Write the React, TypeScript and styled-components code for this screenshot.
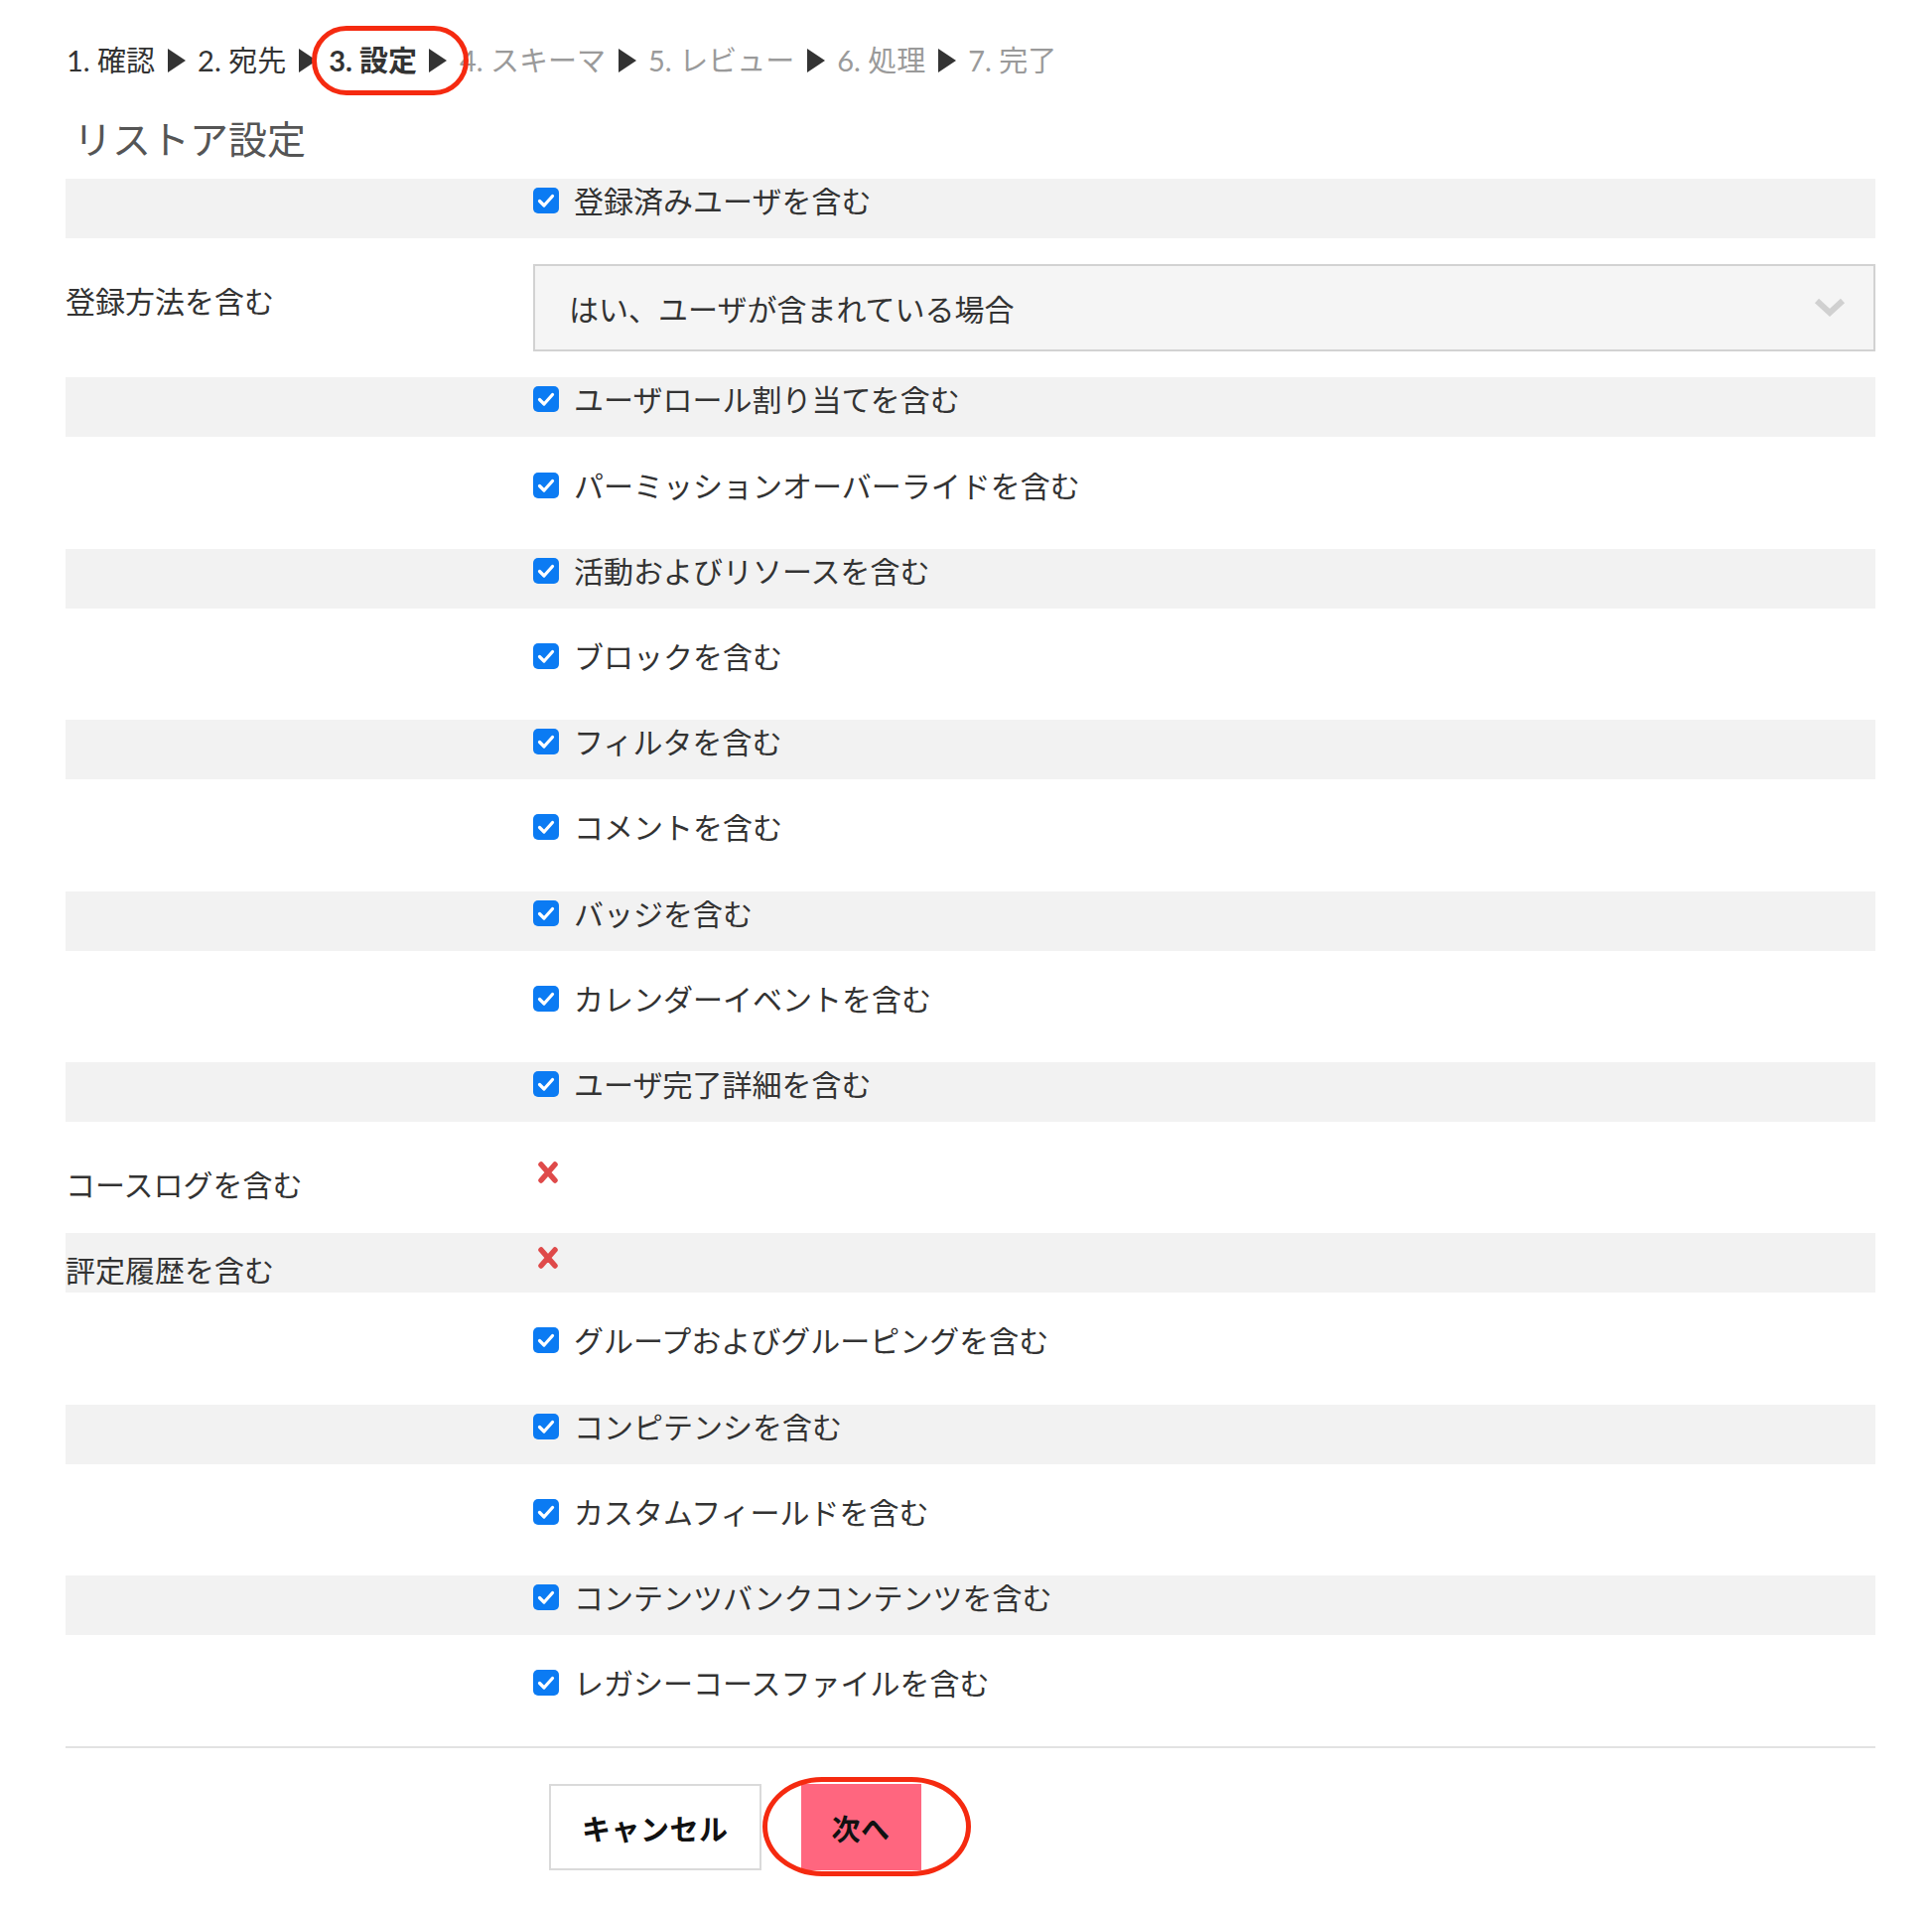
import React from 'react';
import styled, { createGlobalStyle } from 'styled-components';

const GlobalStyle = createGlobalStyle`
  body {
    margin: 0;
    background: #fff;
    color: #333;
    font-family: Lato, "Noto Sans CJK JP", sans-serif;
  }
`;

const Page = styled.div`
  padding: 41px 57px 40px 66px;
`;

const Breadcrumb = styled.nav`
  display: flex;
  align-items: center;
  height: 40px;
  padding-left: 1px;
  font-size: 29px;
  line-height: 40px;
  white-space: nowrap;
`;

const Step = styled.span<{ $state: 'done' | 'current' | 'todo' }>`
  color: ${(p) => (p.$state === 'todo' ? '#9a9a9a' : '#333')};
  font-weight: ${(p) => (p.$state === 'current' ? 700 : 400)};
`;

const Arrow = styled.span`
  display: inline-block;
  width: 0;
  height: 0;
  margin: 0 12.5px;
  border-left: 18px solid #333;
  border-top: 12.5px solid transparent;
  border-bottom: 12.5px solid transparent;
`;

const Current = styled.span`
  position: relative;
  display: inline-flex;
  align-items: center;

  &::after {
    content: '';
    position: absolute;
    top: -15px;
    bottom: -15px;
    left: -17px;
    right: -9px;
    border: 5px solid #f52a10;
    border-radius: 40px;
  }
`;

const Heading = styled.h2`
  margin: 36px 0 17px;
  padding-left: 8px;
  font-size: 39px;
  line-height: 46px;
  font-weight: 400;
  color: #555;
`;

const Row = styled.div<{ $shade: boolean }>`
  display: grid;
  grid-template-columns: 471px 1fr;
  min-height: 60px;
  margin-bottom: 26.2px;
  background: ${(p) => (p.$shade ? '#f2f2f2' : 'transparent')};
`;

const Label = styled.div`
  padding-top: 20px;
  font-size: 30px;
  line-height: 34px;
  color: #333;
`;

const Field = styled.div<{ $top: number }>`
  padding-top: ${(p) => p.$top}px;
`;

const CheckLabel = styled.label`
  display: flex;
  align-items: center;
  gap: 15px;
  height: 34px;
  font-size: 30px;
  line-height: 34px;
  color: #333;
`;

const Select = styled.div`
  box-sizing: border-box;
  display: flex;
  align-items: center;
  justify-content: space-between;
  height: 88px;
  padding: 0 28px 0 34px;
  border: 2px solid #d2d2d2;
  background: #f5f5f5;
  font-size: 30px;
  color: #333;
`;

const Divider = styled.hr`
  margin: 0;
  border: 0;
  border-top: 2px solid #e2e2e2;
`;

const Actions = styled.div`
  display: flex;
  gap: 40px;
  padding: 36px 0 0 487px;
`;

const Button = styled.button<{ $primary?: boolean }>`
  box-sizing: border-box;
  height: 87px;
  padding: 0 31px;
  border: ${(p) => (p.$primary ? '0' : '2px solid #dadada')};
  background: ${(p) => (p.$primary ? '#ff667f' : '#fff')};
  color: #111;
  font-family: Lato, "Noto Sans CJK JP", sans-serif;
  font-size: 29px;
  font-weight: 700;
  letter-spacing: 0.5px;
  cursor: pointer;
`;

const Marked = styled.span`
  position: relative;
  display: inline-flex;

  &::after {
    content: '';
    position: absolute;
    top: -7px;
    bottom: -6px;
    left: -39px;
    right: -50px;
    border: 5px solid #f52a10;
    border-radius: 60px / 50px;
    pointer-events: none;
  }
`;

const CheckIcon = () => (
  <svg width="26" height="26" viewBox="0 0 26 26">
    <rect width="26" height="26" rx="5" fill="#0b7bf3" />
    <path d="M6.5 13.5l4.5 4.5 8.5-9.5" stroke="#fff" strokeWidth="3.2" fill="none" strokeLinecap="round" strokeLinejoin="round" />
  </svg>
);

const CrossIcon = () => (
  <svg width="26" height="22" viewBox="0 0 26 22" style={{ display: 'block', marginLeft: 4 }}>
    <path d="M4 3l14 16M18 3L4 19" stroke="#df4a4a" strokeWidth="5.5" strokeLinecap="round" />
  </svg>
);

const Chevron = () => (
  <svg width="32" height="22" viewBox="0 0 32 22">
    <polyline points="3,4 16,16 29,4" stroke="#d0d0d0" strokeWidth="6" fill="none" />
  </svg>
);

type Item =
  | { kind: 'check'; text: string }
  | { kind: 'select'; label: string; value: string }
  | { kind: 'static'; label: string };

const items: Item[] = [
  { kind: 'check', text: '登録済みユーザを含む' },
  { kind: 'select', label: '登録方法を含む', value: 'はい、ユーザが含まれている場合' },
  { kind: 'check', text: 'ユーザロール割り当てを含む' },
  { kind: 'check', text: 'パーミッションオーバーライドを含む' },
  { kind: 'check', text: '活動およびリソースを含む' },
  { kind: 'check', text: 'ブロックを含む' },
  { kind: 'check', text: 'フィルタを含む' },
  { kind: 'check', text: 'コメントを含む' },
  { kind: 'check', text: 'バッジを含む' },
  { kind: 'check', text: 'カレンダーイベントを含む' },
  { kind: 'check', text: 'ユーザ完了詳細を含む' },
  { kind: 'static', label: 'コースログを含む' },
  { kind: 'static', label: '評定履歴を含む' },
  { kind: 'check', text: 'グループおよびグルーピングを含む' },
  { kind: 'check', text: 'コンピテンシを含む' },
  { kind: 'check', text: 'カスタムフィールドを含む' },
  { kind: 'check', text: 'コンテンツバンクコンテンツを含む' },
  { kind: 'check', text: 'レガシーコースファイルを含む' },
];

const App: React.FC = () => {
  return (
    <Page>
      <GlobalStyle />
      <Breadcrumb>
        <Step $state="done">1. 確認</Step>
        <Arrow />
        <Step $state="done">2. 宛先</Step>
        <Arrow />
        <Current>
          <Step $state="current">3. 設定</Step>
          <Arrow />
        </Current>
        <Step $state="todo">4. スキーマ</Step>
        <Arrow />
        <Step $state="todo">5. レビュー</Step>
        <Arrow />
        <Step $state="todo">6. 処理</Step>
        <Arrow />
        <Step $state="todo">7. 完了</Step>
      </Breadcrumb>

      <Heading>リストア設定</Heading>

      {items.map((item, i) => (
        <Row key={i} $shade={i % 2 === 0}>
          {item.kind === 'check' && (
            <>
              <div />
              <Field $top={5}>
                <CheckLabel>
                  <CheckIcon />
                  {item.text}
                </CheckLabel>
              </Field>
            </>
          )}
          {item.kind === 'select' && (
            <>
              <Label>{item.label}</Label>
              <Select>
                <span>{item.value}</span>
                <Chevron />
              </Select>
            </>
          )}
          {item.kind === 'static' && (
            <>
              <Label>{item.label}</Label>
              <Field $top={14}>
                <CrossIcon />
              </Field>
            </>
          )}
        </Row>
      ))}

      <Divider />
      <Actions>
        <Button>キャンセル</Button>
        <Marked>
          <Button $primary>次へ</Button>
        </Marked>
      </Actions>
    </Page>
  );
};

export default App;
